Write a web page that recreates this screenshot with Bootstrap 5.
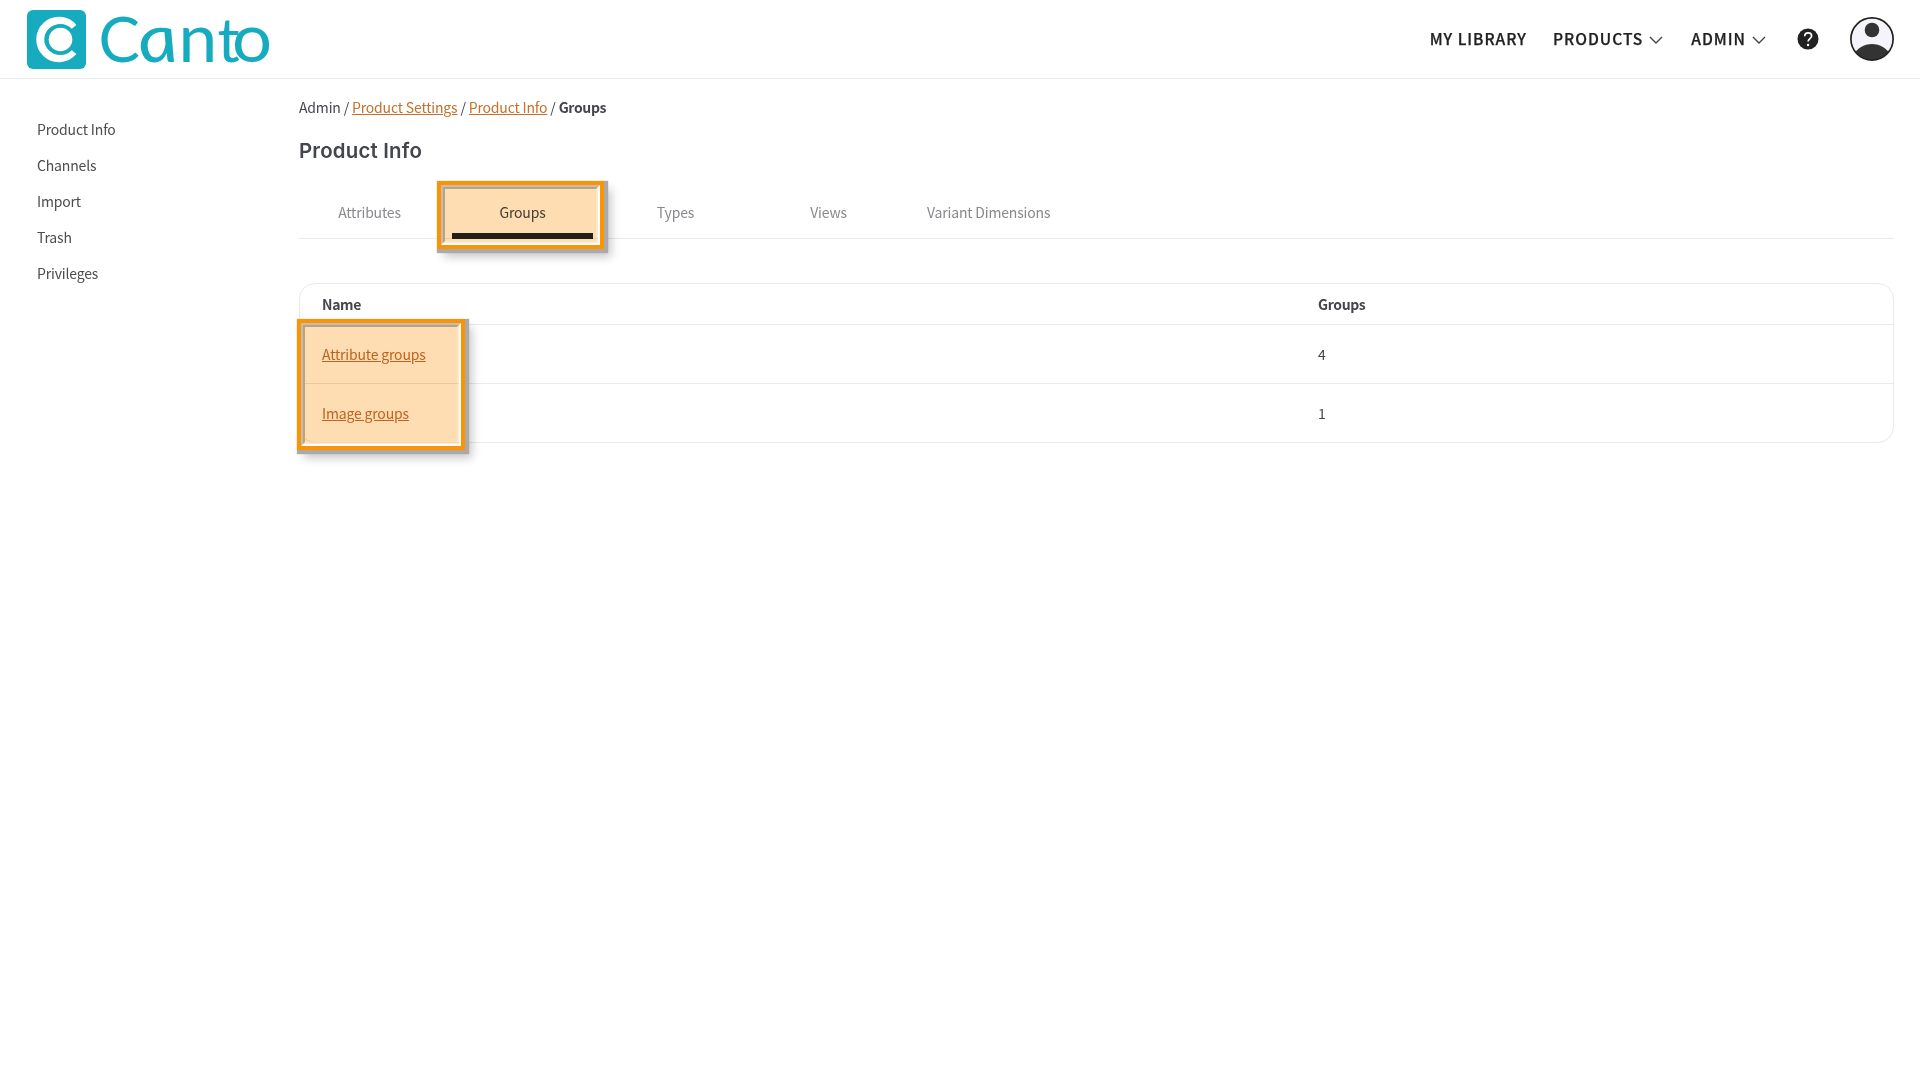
<!DOCTYPE html>
<html lang="en">
<head>
<meta charset="utf-8">
<title>Canto – Groups</title>
<meta name="viewport" content="width=device-width, initial-scale=1">
<link href="https://cdn.jsdelivr.net/npm/bootstrap@5.3.0/dist/css/bootstrap.min.css" rel="stylesheet">
<style>
  body { font-family: "Noto Sans CJK SC", "Noto Sans", sans-serif; font-size: 14px; letter-spacing: -.17px; line-height: 20px; color: #45464c; background: #fff; }
  a { color: #c4702b; }
  .topbar { height: 79px; border-bottom: 1px solid #ebebeb; padding: 0 26px 0 27px; }
  .topnav { font-size: 15.6px; font-weight: 500; letter-spacing: .97px; color: #222; -webkit-text-stroke: .25px #222; }
  .topnav a { color: inherit; text-decoration: none; white-space: nowrap; margin-top: -3px; }
  .brandmark { overflow: visible; }
  .side { width: 299px; padding: 32px 0 0 37px; }
  .side a { color: #4c4c50; text-decoration: none; line-height: 36px; }
  .content { padding: 18px 26px 0 0; min-height: calc(100vh - 79px); }
  .trail { height: 20px; white-space: pre; }
  .trail b, .line.head { letter-spacing: -.35px; }
  .title { font: 600 20.4px/24px Inter, sans-serif; letter-spacing: .2px; color: #45464c; margin: 22px 0 0; }
  .tabs { height: 54px; margin-top: 22px; gap: 12px; border-bottom: 1px solid #e9e9ee; }
  .tabs .tab-item { min-width: 141px; padding: 17px 16px 0; text-align: center; color: #88898d; height: 54px; text-decoration: none; white-space: nowrap; }
  .tabs .tab-item.active { color: #45464c; border-bottom: 6px solid #222; }
  .panel { margin-top: 44px; border: 1px solid #e9e9ee; border-radius: 16px; }
  .line { height: 59px; padding-left: 22px; border-top: 1px solid #e9e9ee; }
  .line.head { height: 40px; border-top: 0; font-weight: 700; }
  .line > :first-child { width: 996px; }
  .callout { position: absolute; border: 4px solid #fb9400; background: #fdddb1; mix-blend-mode: multiply; z-index: 2; }
  .frame { position: absolute; z-index: 3; box-shadow: 2px 2px 1px 2px #aaa, 7px 8px 9px rgba(0,0,0,.22); border: 4px solid #fb9400; pointer-events: none; }
  .frame::before { content: ""; position: absolute; inset: 0; border: 2px solid #fff; border-top-color: #c0bdba; border-left-color: #c0bdba; }
  .frame::after { content: ""; position: absolute; inset: 2px; border: 2px solid rgba(255,255,255,.3); border-top-color: #b9a384; border-left-color: #b9a384; }
  .on-tab { left: -15px; top: -4px; width: 167px; height: 68px; }
  .on-rows { left: -3px; top: 35px; width: 168px; height: 131px; }
</style>
</head>
<body>
<header class="topbar d-flex align-items-center justify-content-between">
  <a href="#" class="d-block" aria-label="Canto home">
    <svg class="brandmark d-block" width="250" height="78" viewBox="27 0 250 78">
      <rect x="27" y="10" width="59" height="59" rx="6" fill="#17abbf"/>
      <path d="M73.300 27.500A18.700 18.700 0 1 0 73.300 51.500" fill="none" stroke="#fff" stroke-width="8"/>
      <circle cx="60.500" cy="39.500" r="15.500" fill="#17abbf"/>
      <circle cx="60.500" cy="39.500" r="11.800" fill="#fff"/>
      <g font-family="Lato" font-size="62" fill="#17abbf" letter-spacing="0">
        <text x="98.500" y="62">C</text>
        <text transform="translate(142 62) skewX(13) scale(1.260 1.080)" font-style="italic">a</text>
        <text transform="translate(178.500 62) scale(1.120 1.080)">n</text>
        <text x="217.500" y="62">t</text>
        <text transform="translate(232 62) scale(1.140 1.080)">o</text>
      </g>
    </svg>
  </a>
  <nav class="topnav d-flex align-items-center">
    <a href="#" style="margin-right:26px">MY LIBRARY</a>
    <a href="#">PRODUCTS</a>
    <svg width="14" height="9" viewBox="0 0 14 9" style="margin:2px 28px 0 6px"><path d="M1 1l6 6 6-6" fill="none" stroke="#444" stroke-width="1.400"/></svg>
    <a href="#">ADMIN</a>
    <svg width="14" height="9" viewBox="0 0 14 9" style="margin:2px 31px 0 6px"><path d="M1 1l6 6 6-6" fill="none" stroke="#444" stroke-width="1.400"/></svg>
    <svg width="22" height="22" viewBox="0 0 22 22" style="margin-right:31px"><circle cx="11" cy="11" r="10.500" fill="#222"/><path d="M7.700 8.300C7.700 6.100 9.200 4.800 11.200 4.800S14.600 6.200 14.600 8c0 2.500-3.500 2.700-3.500 5.500" fill="none" stroke="#fff" stroke-width="1.700"/><circle cx="11.100" cy="17" r="1.200" fill="#fff"/></svg>
    <svg width="44" height="44" viewBox="0 0 44 44"><clipPath id="face"><circle cx="22" cy="22" r="21"/></clipPath><circle cx="22" cy="22" r="21" fill="#f4f4fa"/><g clip-path="url(#face)" fill="#333"><circle cx="22" cy="13" r="7.300"/><path d="M4 38C7 31 14 27 22 27S37 31 40 38V44H4z"/></g><circle cx="22" cy="22" r="21.100" fill="none" stroke="#222" stroke-width="1.700"/></svg>
  </nav>
</header>
<div class="d-flex">
  <aside class="side flex-shrink-0">
    <ul class="nav flex-column mb-0">
      <li><a class="d-block" href="#">Product Info</a></li>
      <li><a class="d-block" href="#">Channels</a></li>
      <li><a class="d-block" href="#">Import</a></li>
      <li><a class="d-block" href="#">Trash</a></li>
      <li><a class="d-block" href="#">Privileges</a></li>
    </ul>
  </aside>
  <main class="content flex-grow-1">
    <div class="trail">Admin / <a href="#">Product Settings</a> / <a href="#">Product Info</a> / <b>Groups</b></div>
    <h1 class="title">Product Info</h1>
    <nav class="tabs d-flex">
      <a class="tab-item" href="#">Attributes</a>
      <a class="tab-item active position-relative" href="#">Groups<span class="callout on-tab"></span><span class="frame on-tab"></span></a>
      <a class="tab-item" href="#">Types</a>
      <a class="tab-item" href="#">Views</a>
      <a class="tab-item" href="#">Variant Dimensions</a>
    </nav>
    <section class="panel position-relative">
      <div class="line head d-flex align-items-center"><div>Name</div><div>Groups</div></div>
      <div class="line d-flex align-items-center"><div><a href="#">Attribute groups</a></div><div>4</div></div>
      <div class="line d-flex align-items-center"><div><a href="#">Image groups</a></div><div>1</div></div>
      <span class="callout on-rows"></span><span class="frame on-rows"></span>
    </section>
  </main>
</div>
<script src="https://cdn.jsdelivr.net/npm/bootstrap@5.3.0/dist/js/bootstrap.bundle.min.js"></script>
</body>
</html>
